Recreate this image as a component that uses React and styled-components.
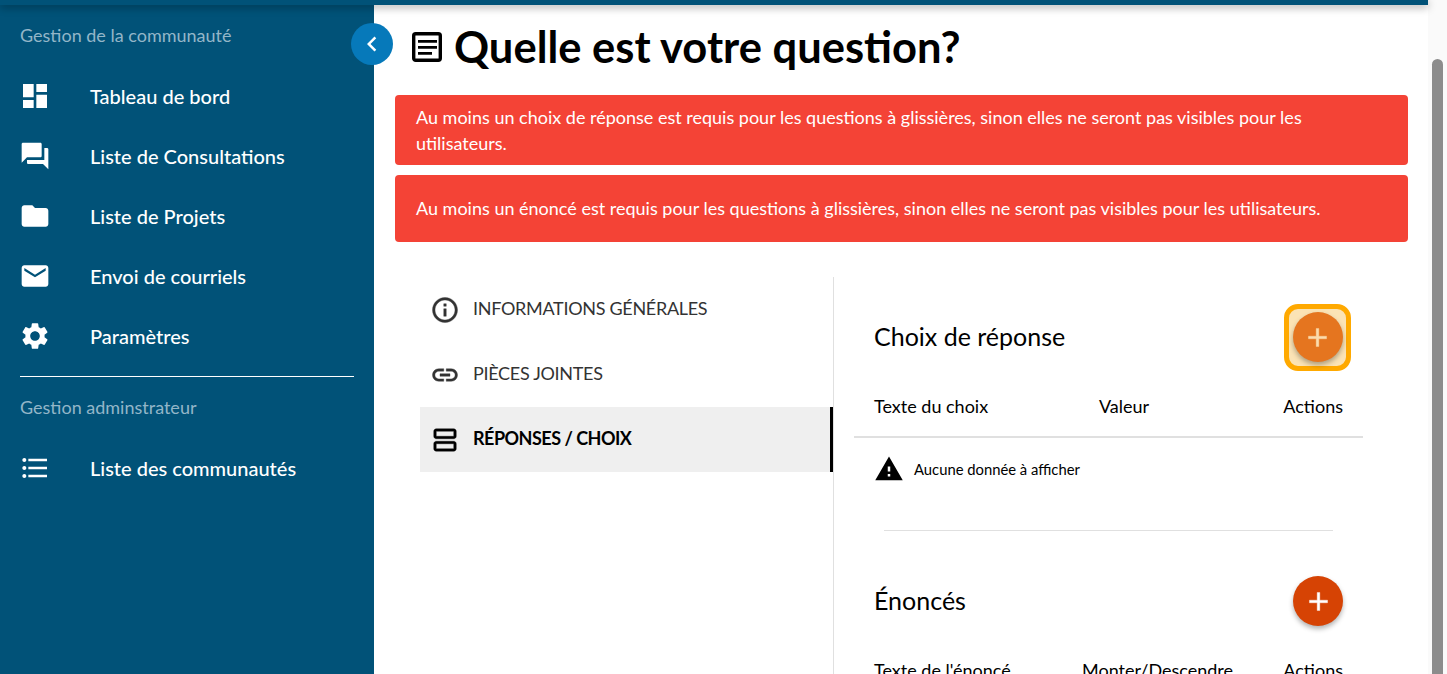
import React from "react";
import styled, { createGlobalStyle } from "styled-components";
import {
  MdDashboard,
  MdQuestionAnswer,
  MdFolder,
  MdEmail,
  MdSettings,
  MdFormatListBulleted,
  MdInfoOutline,
  MdLink,
  MdOutlineViewAgenda,
  MdWarning,
  MdAdd,
  MdChevronLeft,
} from "react-icons/md";

const GlobalStyle = createGlobalStyle`
  html, body {
    margin: 0;
    height: 100%;
    overflow: hidden;
    background: #fff;
    font-family: Lato, "Liberation Sans", sans-serif;
  }
`;

const Page = styled.div`
  display: flex;
  height: 674px;
  overflow: hidden;
`;

const Viewport = styled.div`
  flex: 1;
  min-width: 0;
  display: flex;
  flex-direction: column;
  position: relative;
`;

const TopBar = styled.div`
  height: 5px;
  flex: none;
  background: #015278;
  box-shadow: 0 2px 8px rgba(0, 0, 0, 0.4);
  position: relative;
  z-index: 2;
`;

const Body = styled.div`
  flex: 1;
  min-height: 0;
  display: flex;
`;

const Sidebar = styled.aside`
  width: 374px;
  flex: none;
  box-sizing: border-box;
  padding: 0 20px;
  background: #015278;
  color: #fff;
`;

const SectionLabel = styled.div`
  height: 20px;
  line-height: 20px;
  font-size: 18px;
  color: #93b6c8;
  margin-top: 20px;
`;

const NavList = styled.nav`
  display: flex;
  flex-direction: column;
  margin-top: 21px;
`;

const NavItem = styled.div`
  height: 60px;
  display: flex;
  align-items: center;
  font-size: 20px;
  font-weight: 500;

  & svg {
    width: 32px;
    height: 32px;
    margin-left: -1px;
    margin-right: 39px;
    flex: none;
  }
`;

const SideDivider = styled.hr`
  border: 0;
  height: 1px;
  background: #fff;
  margin: 10px 0 0;
`;

const Toggle = styled.button`
  position: absolute;
  top: 23px;
  left: 351px;
  width: 42px;
  height: 42px;
  padding: 0;
  border: 0;
  border-radius: 50%;
  background: #0679ba;
  color: #fff;
  display: flex;
  align-items: center;
  justify-content: center;
  z-index: 1;

  & svg {
    width: 30px;
    height: 30px;
  }
`;

const Main = styled.main`
  flex: 1;
  min-width: 0;
  box-sizing: border-box;
  padding: 0 20px 0 21px;
`;

const TitleRow = styled.div`
  height: 90px;
  display: flex;
  align-items: center;
  padding: 0 0 6px 13px;
  box-sizing: border-box;

  & svg {
    width: 40px;
    height: 40px;
    flex: none;
    margin-right: 7px;
  }
`;

const Title = styled.h1`
  margin: 0 0 0 -1px;
  font-size: 43.5px;
  font-weight: 700;
  color: #000;
  line-height: 1;
`;

const AlertBox = styled.div`
  display: flex;
  align-items: center;
  box-sizing: border-box;
  min-height: ${(p) => p.$height}px;
  padding: 9px 21px ${(p) => (p.$single ? 10 : 9)}px;
  margin-bottom: 10px;
  border-radius: 4px;
  background: #f44336;
  color: #fff;
  font-size: 18px;
  line-height: 26px;
`;

const Columns = styled.div`
  display: flex;
  margin: 35px 0 0 25px;
  height: 500px;
`;

const TabList = styled.div`
  width: 414px;
  flex: none;
  box-sizing: border-box;
  border-right: 1px solid #e0e0e0;
`;

const Tab = styled.div`
  height: 65px;
  box-sizing: border-box;
  display: flex;
  align-items: center;
  padding-left: 10px;
  font-size: 18px;
  letter-spacing: ${(p) => (p.$active ? "-0.5px" : "-0.3px")};
  font-weight: ${(p) => (p.$active ? 700 : 400)};
  color: ${(p) => (p.$active ? "#000" : "#333")};
  background: ${(p) => (p.$active ? "#efefef" : "transparent")};
  border-right: 3px solid ${(p) => (p.$active ? "#000" : "transparent")};

  & svg {
    width: 30px;
    height: 30px;
    flex: none;
    margin-right: 13px;
  }

  & svg path:not([fill="none"]) {
    stroke: currentColor;
    stroke-width: 0.3;
  }
`;

const TabLabel = styled.span`
  margin-bottom: 4px;
`;

const Panel = styled.section`
  width: 509px;
  margin-left: 20px;
  flex: none;
`;

const PanelHead = styled.div`
  height: 100px;
  margin-top: ${(p) => p.$top}px;
  display: flex;
  align-items: center;
  justify-content: space-between;
  padding: 0 20px;
`;

const PanelTitle = styled.h2`
  margin: 0 0 2px;
  font-size: 25px;
  font-weight: 400;
  color: #000;
`;

const FocusRing = styled.div`
  width: 67px;
  height: 67px;
  margin-right: -8px;
  box-sizing: border-box;
  display: flex;
  align-items: center;
  justify-content: center;
  border: 5px solid #ffa900;
  border-radius: 14px;
  background: #fbe3b5;
`;

const AddButton = styled.button`
  width: 50px;
  height: 50px;
  padding: 0;
  flex: none;
  border: 0;
  border-radius: 50%;
  display: flex;
  align-items: center;
  justify-content: center;
  background: ${(p) => (p.$focused ? "#e5751f" : "#d64304")};
  color: ${(p) => (p.$focused ? "#fbdcae" : "#fff")};
  box-shadow: 0 3px 5px rgba(0, 0, 0, 0.3);

  & svg {
    width: 31px;
    height: 31px;
  }

  & svg path:not([fill="none"]) {
    stroke: currentColor;
    stroke-width: 0.3;
  }
`;

const TableHead = styled.div`
  display: grid;
  grid-template-columns: ${(p) => p.$first}px 1fr auto;
  align-items: center;
  height: 51px;
  box-sizing: border-box;
  padding: 0 20px 11px;
  font-size: 18px;
  color: #000;
  border-bottom: 2px solid ${(p) => (p.$lined ? "#e0e0e0" : "transparent")};
`;

const EmptyRow = styled.div`
  height: 62px;
  display: flex;
  align-items: center;
  padding-left: 20px;
  font-size: 14.8px;
  color: #000;

  & svg {
    width: 30px;
    height: 30px;
    margin-right: 10px;
  }
`;

const PanelDivider = styled.hr`
  border: 0;
  height: 1px;
  background: #e0e0e0;
  margin: 30px 30px 0;
`;

const ScrollTrack = styled.div`
  width: 19px;
  flex: none;
  background: #fafafa;
  padding-top: 59px;
  box-sizing: border-box;
  display: flex;
  justify-content: center;
`;

const ScrollThumb = styled.div`
  width: 11px;
  height: 100%;
  border-radius: 6px 6px 0 0;
  background: #8c8c8c;
`;

const ArticleIcon = () => (
  <svg viewBox="0 0 40 40" aria-hidden="true">
    <rect x="5.7" y="6.7" width="26.6" height="26.6" rx="2" fill="#fff" stroke="#000" strokeWidth="3.4" />
    <path d="M10 13h19v2.8H10zM10 19h19v2.8H10zM10 25h14v2.8H10z" fill="#000" />
  </svg>
);

const navMain = [
  { label: "Tableau de bord", icon: <MdDashboard /> },
  { label: "Liste de Consultations", icon: <MdQuestionAnswer /> },
  { label: "Liste de Projets", icon: <MdFolder /> },
  { label: "Envoi de courriels", icon: <MdEmail /> },
  { label: "Paramètres", icon: <MdSettings /> },
];

const tabs = [
  { label: "INFORMATIONS GÉNÉRALES", icon: <MdInfoOutline /> },
  { label: "PIÈCES JOINTES", icon: <MdLink /> },
  { label: "RÉPONSES / CHOIX", icon: <MdOutlineViewAgenda />, active: true },
];

export default function App() {
  return (
    <Page>
      <GlobalStyle />
      <Viewport>
        <TopBar />
        <Body>
          <Sidebar>
            <SectionLabel>Gestion de la communauté</SectionLabel>
            <NavList>
              {navMain.map((item) => (
                <NavItem key={item.label}>
                  {item.icon}
                  {item.label}
                </NavItem>
              ))}
            </NavList>
            <SideDivider />
            <SectionLabel>Gestion adminstrateur</SectionLabel>
            <NavList>
              <NavItem>
                <MdFormatListBulleted />
                Liste des communautés
              </NavItem>
            </NavList>
          </Sidebar>
          <Toggle aria-label="Réduire le menu">
            <MdChevronLeft />
          </Toggle>
          <Main>
            <TitleRow>
              <ArticleIcon />
              <Title>Quelle est votre question?</Title>
            </TitleRow>
            <AlertBox $height={70}>
              Au moins un choix de réponse est requis pour les questions à
              glissières, sinon elles ne seront pas visibles pour les
              utilisateurs.
            </AlertBox>
            <AlertBox $height={67} $single>
              Au moins un énoncé est requis pour les questions à glissières,
              sinon elles ne seront pas visibles pour les utilisateurs.
            </AlertBox>
            <Columns>
              <TabList>
                {tabs.map((tab) => (
                  <Tab key={tab.label} $active={tab.active}>
                    {tab.icon}
                    <TabLabel>{tab.label}</TabLabel>
                  </Tab>
                ))}
              </TabList>
              <Panel>
                <PanelHead $top={10}>
                  <PanelTitle>Choix de réponse</PanelTitle>
                  <FocusRing>
                    <AddButton $focused aria-label="Ajouter un choix">
                      <MdAdd />
                    </AddButton>
                  </FocusRing>
                </PanelHead>
                <TableHead $first={225} $lined>
                  <span>Texte du choix</span>
                  <span>Valeur</span>
                  <span>Actions</span>
                </TableHead>
                <EmptyRow>
                  <MdWarning />
                  Aucune donnée à afficher
                </EmptyRow>
                <PanelDivider />
                <PanelHead $top={20}>
                  <PanelTitle>Énoncés</PanelTitle>
                  <AddButton aria-label="Ajouter un énoncé">
                    <MdAdd />
                  </AddButton>
                </PanelHead>
                <TableHead $first={208}>
                  <span>Texte de l'énoncé</span>
                  <span>Monter/Descendre</span>
                  <span>Actions</span>
                </TableHead>
              </Panel>
            </Columns>
          </Main>
        </Body>
      </Viewport>
      <ScrollTrack>
        <ScrollThumb />
      </ScrollTrack>
    </Page>
  );
}
